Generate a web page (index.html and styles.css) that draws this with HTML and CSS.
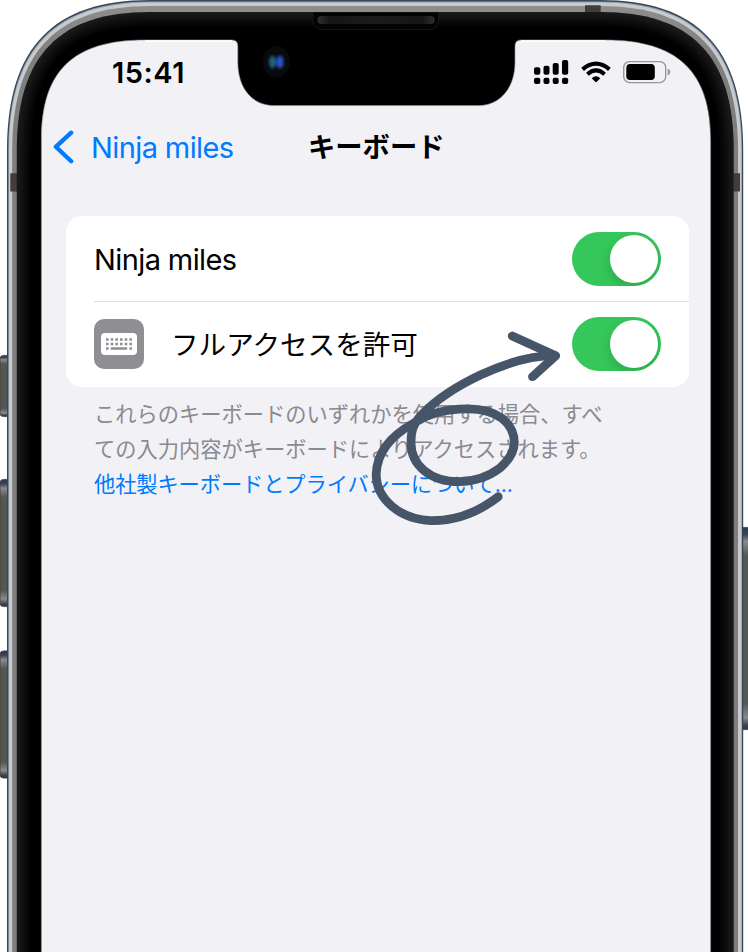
FILE: index.html
```html
<!DOCTYPE html>
<html lang="ja">
<head>
<meta charset="utf-8">
<title>キーボード</title>
<link rel="stylesheet" href="styles.css">
</head>
<body>
<div class="phone">
  <svg class="frame" viewBox="0 0 748 952" aria-hidden="true">
    <defs>
      <linearGradient id="btn" x1="0" y1="0" x2="0" y2="1">
        <stop offset="0" stop-color="#2c3a4d"/><stop offset=".035" stop-color="#3c4350"/>
        <stop offset=".07" stop-color="#8a8b8d"/><stop offset=".14" stop-color="#57554f"/>
        <stop offset=".87" stop-color="#57554f"/><stop offset=".94" stop-color="#8b8b8c"/>
        <stop offset=".98" stop-color="#3a404a"/><stop offset="1" stop-color="#2c3a4d"/>
      </linearGradient>
      <linearGradient id="rim" x1="0" y1="0" x2="0" y2="60" gradientUnits="userSpaceOnUse">
        <stop offset="0" stop-color="#8f8f8f"/><stop offset="1" stop-color="#7e7e7e"/>
      </linearGradient>
      <linearGradient id="speaker"><stop offset="0" stop-color="#303030"/><stop offset=".1" stop-color="#161616"/><stop offset=".5" stop-color="#1b1b1b"/><stop offset=".9" stop-color="#161616"/><stop offset="1" stop-color="#303030"/></linearGradient>
      <filter id="soft"><feGaussianBlur stdDeviation="1.6"/></filter>
      <path id="bezel" d="M16.8 970V150C16.8 55 59.8 12 150 12H600.2C690.4 12 733.7 55 733.7 150V970Z"/>
      <clipPath id="bezelClip"><use href="#bezel"/></clipPath>
    </defs>
    <g fill="url(#btn)" stroke="#3a3d42" stroke-width=".8">
      <rect x="0" y="355.4" width="16" height="61.2" rx="3.5"/>
      <rect x="0" y="479.4" width="16" height="127.2" rx="3.5"/>
      <rect x="0" y="650.9" width="16" height="127.2" rx="3.5"/>
      <rect x="740" y="527.4" width="16" height="202.2" rx="3"/>
    </g>
    <path fill="#34475d" d="M7 970V150C7 47 54 0 150 0H600.2C696 0 743.2 47 743.2 150V970Z"/>
    <path fill="#8fa0b0" d="M8.3 970V150C8.3 48 55 1.5 150 1.5H600.2C695 1.5 742 48 742 150V970Z"/>
    <path fill="#cacaca" d="M9 970V150C9 49 56 2.5 150 2.5H600.2C694.2 2.5 741.3 49 741.3 150V970Z"/>
    <path fill="url(#rim)" d="M12.2 970V150C12.2 51 57.5 6 150 6H600.2C692.7 6 738 51 738 150V970Z"/>
    <g fill="#433c39">
      <path d="M10.3 173.3h6.7v18.3h-6.7zM733.5 173.3h6.5v18.3h-6.5zM585 5.2h15.7v7H585z"/>
    </g>
    <use href="#bezel" fill="#000"/>
    <g clip-path="url(#bezelClip)" fill="none" stroke="#fff" stroke-opacity=".02">
      <use href="#bezel" stroke-width="28"/><use href="#bezel" stroke-width="23"/>
      <use href="#bezel" stroke-width="18"/><use href="#bezel" stroke-width="14"/>
      <use href="#bezel" stroke-width="10"/><use href="#bezel" stroke-width="5"/>
    </g>
    <path d="M313 12.5V20q0 9.5 9.5 9.5H429q9.5 0 9.5-9.5V12.5" fill="#030303" stroke="#161616"/>
    <rect x="317.5" y="16" width="117" height="8" rx="4" fill="url(#speaker)"/>
    <path fill="#f2f1f6" stroke="#929296" stroke-width=".6" d="M41.4 970V140C41.4 72 72 40 145 40H232Q237.8 40 237.8 46V62C237.8 87 251 105.6 275 105.6H478C501 105.6 515 87 515 62V46Q515 40 521 40H605C678 40 710.6 72 710.6 140V970Z"/>
    <path d="M145 41H232M521 41H605" stroke="#fff" stroke-width="1.4"/>
    <ellipse cx="276.3" cy="61.7" rx="13.5" ry="16" fill="#090a0b"/>
    <g filter="url(#soft)"><ellipse cx="272.5" cy="62" rx="3.5" ry="6.5" fill="#1b657b"/><ellipse cx="280" cy="62" rx="3.5" ry="6.5" fill="#2a52cf"/></g>
  </svg>

  <div class="screen">
    <header class="status">
      <span class="time">15:41</span>
      <div class="indicators">
        <svg width="35" height="24" viewBox="0 0 35 24">
          <rect x="0" y="7.3" width="6.3" height="7.4" rx="2"/><rect x="9.5" y="5.8" width="6" height="8.9" rx="2"/>
          <rect x="18.7" y="3" width="6" height="11.7" rx="2"/><rect x="28" y="0" width="6.2" height="14.7" rx="2"/>
          <rect x="0" y="17.7" width="6.3" height="6.2" rx="2"/><rect x="9.5" y="17.7" width="6" height="6.2" rx="2"/>
          <rect x="18.7" y="17.7" width="6" height="6.2" rx="2"/><rect x="28" y="17.7" width="6.2" height="6.2" rx="2"/>
        </svg>
        <svg class="wifi" width="30" height="24" viewBox="0 0 30 24">
          <path d="M1.6 8.3Q15-3 28.4 8.3" fill="none" stroke="#000" stroke-width="4.2"/>
          <path d="M6.4 13.3Q15 5.6 23.6 13.3" fill="none" stroke="#000" stroke-width="4"/>
          <path d="M10.7 17.2Q15 13.4 19.3 17.2L15.8 20.8Q15 21.6 14.2 20.8Z"/>
        </svg>
        <svg class="battery" width="48" height="24" viewBox="0 0 48 24">
          <rect x=".7" y="1.6" width="42" height="21" rx="6" fill="none" stroke="#98979c" stroke-width="1.4"/>
          <rect x="3.3" y="4.1" width="28.5" height="16" rx="3.8"/>
          <path d="M44.7 8.7q2.7 1 2.7 3.4t-2.7 3.4Z" fill="#98979c"/>
        </svg>
      </div>
    </header>

    <nav class="nav">
      <a class="back">
        <svg width="21" height="34" viewBox="0 0 21 34"><path d="M18.2 2.7 2.8 16.8 18.2 31.3" fill="none" stroke="#007aff" stroke-width="4.3" stroke-linecap="round" stroke-linejoin="round"/></svg>
        <span class="latin">Ninja miles</span>
      </a>
      <h1 class="title">キーボード</h1>
    </nav>

    <main class="settings">
      <section class="card">
        <div class="row">
          <span class="latin">Ninja miles</span>
          <span class="toggle"><span class="knob"></span></span>
        </div>
        <div class="row divided">
          <span class="app-icon">
            <svg width="36" height="22" viewBox="0 0 36 22">
              <rect width="36" height="22" rx="4" fill="#fff"/>
              <path d="M5 6.5H32M5 11H32" stroke="#8e8e93" stroke-width="2.6" stroke-dasharray="2.6 2.07"/>
              <path d="M5 15.5h2.6M9.7 15.5h16.5M28.4 15.5H31" stroke="#8e8e93" stroke-width="2.4"/>
            </svg>
          </span>
          <span class="access">フルアクセスを許可</span>
          <span class="toggle"><span class="knob"></span></span>
        </div>
      </section>
      <p class="note">これらのキーボードのいずれかを使用する場合、すべ<br>ての入力内容がキーボードによりアクセスされます。<br><a>他社製キーボードとプライバシーについて...</a></p>
    </main>
  </div>

  <svg class="arrow" viewBox="0 0 748 952" aria-hidden="true">
    <path d="M498.2 496.7C476 514 453 521 431 520.6C400 519.5 376 499 376.2 474C377 452 392 435 414 423C430 412 447 409 467 408.8C497 408.5 514.3 423 514.3 443C514 452 508 461 500 468C488 477 474 481.5 459 481.7C430 481.5 411 465 411 443C411 431 413 424 421 415.5C448 387 509 355.5 555 355.7"/>
    <path d="M512.2 336 555.7 355.7 532.5 376.7"/>
  </svg>
</div>
</body>
</html>
```

FILE: styles.css
```css
* { box-sizing: border-box; }

body {
  margin: 0;
  background: #fff;
  color: #000;
  font-family: Inter, "Noto Sans CJK JP", sans-serif;
}

.phone {
  display: grid;
  width: 748px;
  height: 952px;
  overflow: hidden;
}

.frame,
.screen,
.arrow {
  grid-area: 1 / 1;
  width: 748px;
  height: 952px;
}

.frame, .arrow { display: block; }

.screen {
  padding: 40px 37px 0 41px;
  z-index: 1;
}

.status {
  display: flex;
  justify-content: space-between;
  height: 66px;
  padding: 20px 40px 0 71px;
}

.time {
  padding-top: 1px;
  font-size: 29px;
  font-weight: 600;
  line-height: 24px;
  letter-spacing: 0.5px;
}

.indicators { display: flex; }
.wifi { margin: 1px 0 0 12px; }
.battery { margin-left: 12.5px; }

.nav {
  display: grid;
  grid-template-columns: 255px 1fr;
  align-items: center;
  height: 82px;
  padding-left: 12px;
}

.back {
  display: flex;
  align-items: center;
  gap: 17px;
  color: #007aff;
}

.latin {
  padding-top: 2px;
  font-size: 29px;
  line-height: 36px;
  letter-spacing: -0.6px;
  white-space: nowrap;
}

.title {
  margin: 0;
  padding-top: 2px;
  font-size: 27.3px;
  font-weight: 700;
  line-height: 36px;
}

.settings { padding: 28px 22px 0 25px; }

.card {
  border-radius: 16px;
  background: #fff;
}

.row {
  display: flex;
  align-items: center;
  height: 85px;
  margin-left: 28px;
  padding-right: 28px;
}

.divided {
  height: 86px;
  padding-bottom: 2px;
  border-top: 1px solid #dedee0;
}

.toggle {
  display: flex;
  justify-content: flex-end;
  width: 89px;
  height: 54px;
  margin-left: auto;
  padding: 3px;
  border-radius: 27px;
  background: #35c759;
  overflow: hidden;
}

.knob {
  width: 48px;
  height: 48px;
  border-radius: 50%;
  background: #fff;
  box-shadow: 0 5px 12px rgba(0, 0, 0, .16);
}

.app-icon {
  display: grid;
  place-items: center;
  width: 50px;
  height: 50px;
  border-radius: 10px;
  background: #8e8e93;
}

.access {
  margin-left: 27px;
  padding-top: 3px;
  font-size: 27.6px;
  line-height: 36px;
}

.note {
  margin: 10px 0 0 28px;
  color: #8a8a8f;
  font-size: 21.25px;
  line-height: 35px;
  white-space: nowrap;
}

.note a {
  color: #007aff;
  letter-spacing: -0.1px;
}

.arrow {
  z-index: 2;
  fill: none;
  stroke: #475569;
  stroke-width: 8.8px;
  stroke-linecap: round;
  stroke-linejoin: round;
}
```
